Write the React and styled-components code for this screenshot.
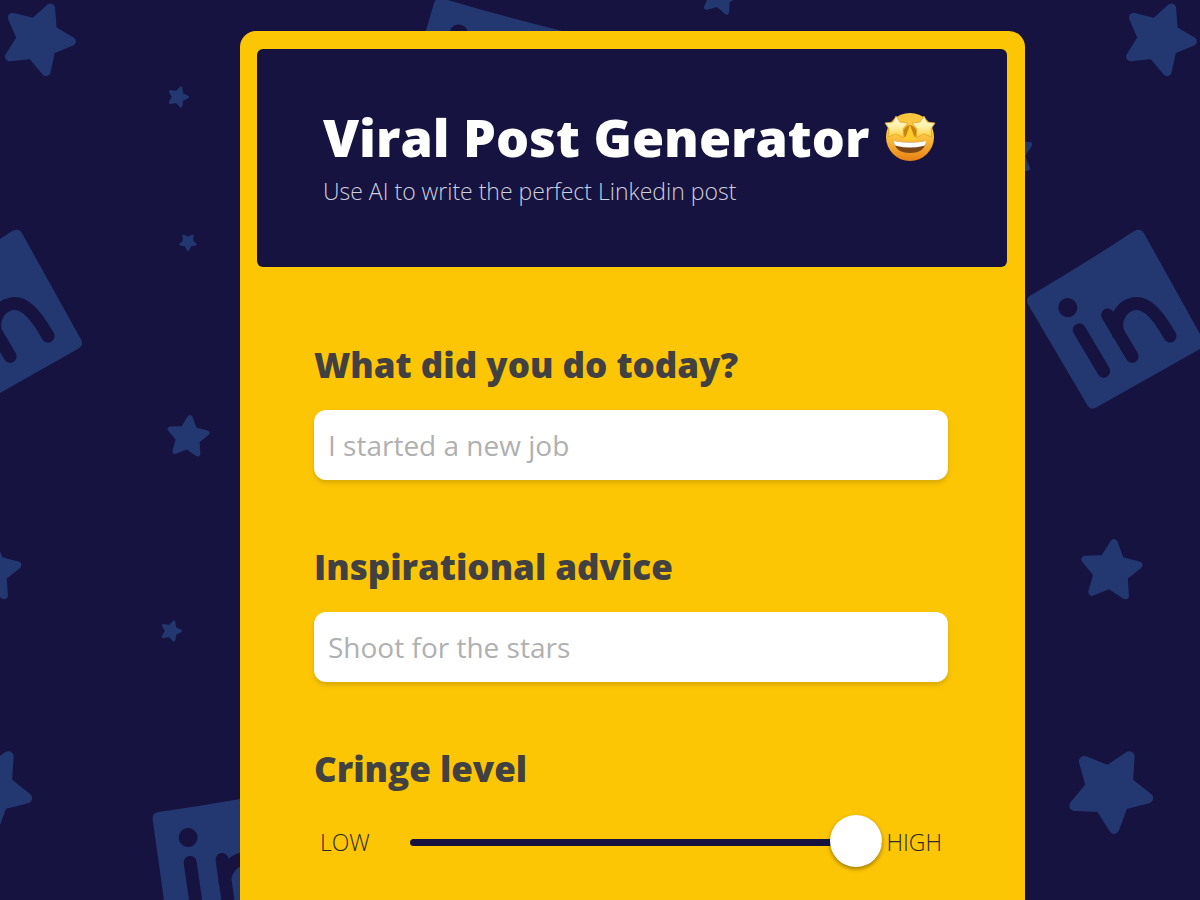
import React, { useState } from 'react'
import styled, { createGlobalStyle } from "styled-components"

const GlobalStyle = createGlobalStyle`
    * {
        box-sizing: border-box;
    }

    body {
        margin: 0;
        background-color: #161340;
        font-family: "Open Sans", "Noto Sans", sans-serif;
    }
`

const Page = styled.div`
    display: flex;
    min-height: 100vh;
    padding: 31px 175px 0 240px;
`

const Backdrop = styled.svg`
    position: fixed;
    inset: 0;
    width: 100%;
    height: 100%;
    z-index: -1;
`

const Card = styled.main`
    flex: 1;
    min-width: 0;
    padding: 18px 18px 0 17px;
    background-color: #fdc605;
    border-radius: 16px 16px 0 0;
`

const Header = styled.header`
    padding: 52px 66px 60px;
    background-color: #161340;
    border-radius: 6px;
`

const Title = styled.h1`
    display: flex;
    align-items: center;
    gap: 15px;
    margin: 0;
    font-size: 52px;
    font-weight: 800;
    line-height: 72px;
    color: #fff;
    white-space: nowrap;
`

const Emoji = styled.svg`
    width: 52px;
    height: 52px;
    flex-shrink: 0;
`

const Subtitle = styled.p`
    margin: 2px 0 0;
    font-size: 23px;
    font-weight: 300;
    line-height: 32px;
    color: #d0cfdc;
`

const Form = styled.form`
    display: flex;
    flex-direction: column;
    gap: 63px;
    padding: 74px 59px 24px 57px;
`

const Field = styled.div`
    display: flex;
    flex-direction: column;
    gap: 21px;
`

const Label = styled.label`
    font-size: 35px;
    font-weight: 800;
    line-height: 48px;
    color: #414042;
`

const TextInput = styled.input`
    width: 100%;
    height: 70px;
    padding: 0 14px;
    border: none;
    border-radius: 12px;
    background-color: #fff;
    box-shadow: 0 3px 5px rgba(0, 0, 0, 0.15);
    font-family: inherit;
    font-size: 28px;
    font-weight: 400;
    color: #414042;

    &::placeholder {
        color: #b0b0b0;
        opacity: 1;
    }
`

const SliderRow = styled.div`
    display: flex;
    align-items: center;
    padding: 2px 6px;
`

const SliderText = styled.span`
    width: ${(props)=>props.$end ? "56px" : "90px"};
    flex-shrink: 0;
    text-align: ${(props)=>props.$end ? "right" : "left"};
    font-size: 23px;
    font-weight: 300;
    line-height: 32px;
    color: #2c2a2a;
`

const Slider = styled.input`
    flex: 1;
    min-width: 0;
    height: 52px;
    margin: 0 4px 0 0;
    background: transparent;
    appearance: none;
    cursor: pointer;

    &::-webkit-slider-runnable-track {
        height: 7px;
        border-radius: 4px;
        background-color: #161340;
    }

    &::-webkit-slider-thumb {
        appearance: none;
        width: 52px;
        height: 52px;
        margin-top: -24px;
        border-radius: 50%;
        background-color: #fff;
        box-shadow: 0 2px 4px rgba(0, 0, 0, 0.4);
    }
`

const stars = [
    { x: 38, y: 39, r: 38, turn: 22 },
    { x: 1159, y: 39, r: 38, turn: 22 },
    { x: 178, y: 97, r: 11, turn: 18 },
    { x: 188, y: 242, r: 9, turn: 36 },
    { x: 188, y: 437, r: 22, turn: 6 },
    { x: -10, y: 571, r: 32, turn: 6 },
    { x: 1111, y: 571, r: 32, turn: 6 },
    { x: 171, y: 631, r: 11, turn: 18 },
    { x: -11, y: 790, r: 44, turn: 30 },
    { x: 1110, y: 790, r: 44, turn: 30 },
    { x: 1012, y: 155, r: 23, turn: 59 },
    { x: 720, y: -4, r: 20, turn: 14 },
]

const logos = [
    { x: -7, y: 320, turn: -29.5 },
    { x: 1115, y: 320, turn: -29.5 },
    { x: 227, y: 867, turn: -7 },
    { x: 482, y: 77, turn: 17.5 },
]

const starPoints = Array.from({ length: 10 }, (_, i) => {
    const radius = i % 2 ? 22 : 44
    const angle = (i * 36 - 90) * Math.PI / 180
    return `${(radius * Math.cos(angle)).toFixed(1)},${(radius * Math.sin(angle)).toFixed(1)}`
}).join(" ")

const Pattern = () => {
    return (
        <Backdrop viewBox="0 0 1200 900" preserveAspectRatio="xMinYMin slice" aria-hidden="true">
            {stars.map(({ x, y, r, turn }) => (
                <polygon
                    key={`${x}-${y}`}
                    points={starPoints}
                    transform={`translate(${x} ${y}) rotate(${turn}) scale(${r / 50})`}
                    fill="#233870"
                    stroke="#233870"
                    strokeWidth="12"
                    strokeLinejoin="round"
                />
            ))}
            {logos.map(({ x, y, turn }) => (
                <g key={`${x}-${y}`} transform={`translate(${x} ${y}) rotate(${turn})`}>
                    <path
                        d="M-61 -63 Q0 -64 60 -68 Q68 -68 68 -61 L67 60 Q67 67 60 67 L-59 67 Q-66 67 -66 60 L-68 -56 Q-68 -63 -61 -63 Z"
                        fill="#233870"
                    />
                    <circle cx="-35" cy="-34" r="9.5" fill="#161340" />
                    <path
                        d="M-36 -9 L-35 39 M-4 -8 L-3 40 M-4 14 C-2 0 10 -7 20 -6 C36 -4 40 14 40 41"
                        fill="none"
                        stroke="#161340"
                        strokeWidth="13"
                        strokeLinecap="round"
                    />
                </g>
            ))}
        </Backdrop>
    )
}

const StarStruck = () => {
    return (
        <Emoji viewBox="0 0 52 52" role="img" aria-label="Star-struck">
            <defs>
                <linearGradient id="face" x1="0" y1="0" x2="0" y2="1">
                    <stop offset="0" stopColor="#fbc63c" />
                    <stop offset="0.45" stopColor="#fdc843" />
                    <stop offset="1" stopColor="#e97f13" />
                </linearGradient>
                <linearGradient id="eye" x1="0" y1="0" x2="0" y2="1">
                    <stop offset="0" stopColor="#fffbe0" />
                    <stop offset="0.5" stopColor="#fff0a4" />
                    <stop offset="1" stopColor="#f9c92c" />
                </linearGradient>
            </defs>
            <circle cx="26" cy="26" r="24" fill="url(#face)" />
            <path d="M19 20 Q26 8 33 20 L31 28 H21 Z" fill="#c98312" />
            <path d="M26 14 L30 25 L34 29 H18 L22 25 Z" fill="#fbcb2d" />
            <g fill="url(#eye)" stroke="#e2a224" strokeWidth="0.8" strokeLinejoin="round">
                <path d="M12 5 L16 11 L24 12 L19 18 L20 27 L12 23 L4 26 L5 18 L1 12 L9 11 Z" />
                <path d="M40 5 L43 11 L51 12 L47 18 L48 26 L40 23 L32 27 L33 18 L28 12 L36 11 Z" />
            </g>
            <path d="M10 30 Q26 33 42 30 Q41 42 26 42 Q11 42 10 30 Z" fill="#7b4717" />
            <path d="M10 30 Q26 33 42 30 Q42 35 39 35 Q26 38 13 35 Q10 35 10 30 Z" fill="#fff" />
        </Emoji>
    )
}

const App = () => {
    const [cringe, setCringe] = useState(100)

    return (
        <>
            <GlobalStyle />
            <Pattern />
            <Page>
                <Card>
                    <Header>
                        <Title>Viral Post Generator <StarStruck /></Title>
                        <Subtitle>Use AI to write the perfect Linkedin post</Subtitle>
                    </Header>
                    <Form>
                        <Field>
                            <Label htmlFor="today">What did you do today?</Label>
                            <TextInput id="today" type="text" placeholder="I started a new job" />
                        </Field>
                        <Field>
                            <Label htmlFor="advice">Inspirational advice</Label>
                            <TextInput id="advice" type="text" placeholder="Shoot for the stars" />
                        </Field>
                        <Field>
                            <Label htmlFor="cringe">Cringe level</Label>
                            <SliderRow>
                                <SliderText>LOW</SliderText>
                                <Slider
                                    id="cringe"
                                    type="range"
                                    min="0"
                                    max="100"
                                    value={cringe}
                                    onChange={(e) => setCringe(Number(e.target.value))}
                                />
                                <SliderText $end>HIGH</SliderText>
                            </SliderRow>
                        </Field>
                    </Form>
                </Card>
            </Page>
        </>
    )
}

export default App
